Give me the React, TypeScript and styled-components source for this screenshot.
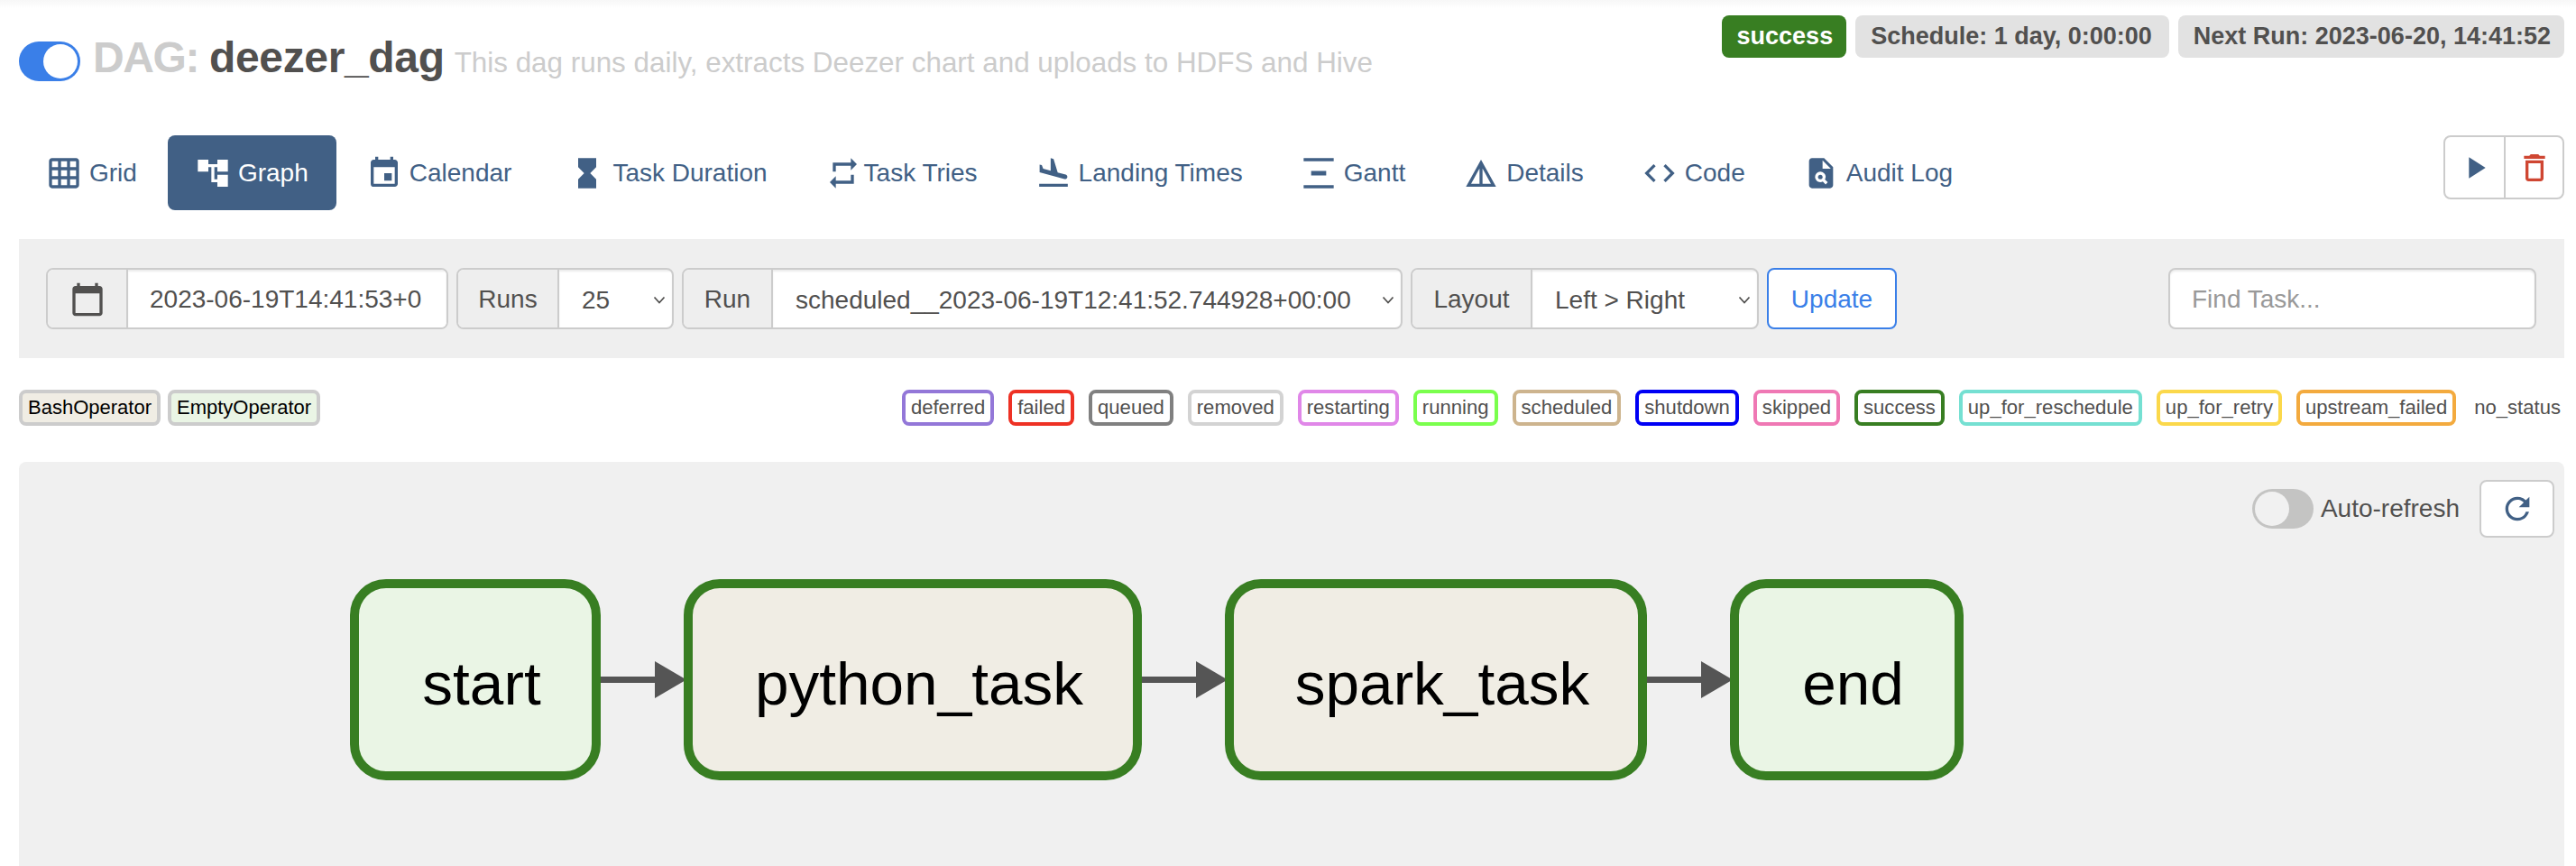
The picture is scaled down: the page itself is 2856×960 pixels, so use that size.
import React from 'react';
import styled, { createGlobalStyle } from 'styled-components';
import {
  MdGridOn,
  MdAccountTree,
  MdEvent,
  MdHourglassFull,
  MdRepeat,
  MdFlightLand,
  MdVerticalDistribute,
  MdDetails,
  MdCode,
  MdPlagiarism,
  MdPlayArrow,
  MdDeleteOutline,
  MdRefresh,
  MdCalendarToday,
} from 'react-icons/md';

const GlobalStyle = createGlobalStyle`
  html, body {
    margin: 0;
    padding: 0;
    background: #fff;
    font-family: "Liberation Sans", Arial, sans-serif;
    color: #51504f;
  }
  * { box-sizing: border-box; }
`;

const Page = styled.div`
  width: 2856px;
  height: 960px;
  overflow: hidden;
  padding: 0 13px 0 21px;
  background: linear-gradient(#f7f7f7, #fff 9px);
`;

const Header = styled.header`
  height: 150px;
  display: flex;
  justify-content: space-between;
  align-items: flex-start;
`;

const TitleRow = styled.div`
  display: flex;
  align-items: flex-start;
  padding-top: 46px;
`;

const Title = styled.h3`
  margin: -4px 0 0 14px;
  font-size: 48px;
  line-height: 44px;
  font-weight: 700;
  color: #ccc;
  white-space: nowrap;
`;

const DagPrefix = styled.span`
  letter-spacing: -1.4px;
`;

const DagName = styled.span`
  letter-spacing: -0.35px;
  color: #51504f;
`;

const Description = styled.small`
  margin-left: 11px;
  font-size: 31.4px;
  font-weight: 400;
  letter-spacing: 0;
  color: #ccc;
`;

const Switch = styled.span<{ $on?: boolean }>`
  flex: none;
  width: 68px;
  height: 44px;
  border-radius: 22px;
  padding: 3px;
  display: flex;
  justify-content: ${(p) => (p.$on ? 'flex-end' : 'flex-start')};
  background: ${(p) => (p.$on ? '#3a7fe8' : '#c4c4c3')};
  &::after {
    content: '';
    width: 38px;
    height: 38px;
    border-radius: 50%;
    background: ${(p) => (p.$on ? '#fff' : '#f1f1f1')};
  }
`;

const Pills = styled.div`
  display: flex;
  gap: 10px;
  padding-top: 17px;
`;

const Pill = styled.span<{ $success?: boolean; $trail?: number }>`
  height: 47px;
  padding: 0 ${(p) => p.$trail ?? 15}px 0 17px;
  display: flex;
  align-items: center;
  border-radius: 8px;
  font-size: 27px;
  font-weight: 700;
  white-space: nowrap;
  background: ${(p) => (p.$success ? '#387e22' : '#e2e2e2')};
  color: ${(p) => (p.$success ? '#fff' : '#51504f')};
`;

const NavRow = styled.div`
  display: flex;
  justify-content: space-between;
  align-items: flex-start;
  height: 83px;
`;

const Nav = styled.nav`
  display: flex;
`;

const NavItem = styled.a<{ $active?: boolean; $gap?: number }>`
  height: 83px;
  padding: 0 ${(p) => (p.$active ? 31 : 34)}px 0 30px;
  margin-right: ${(p) => (p.$active ? 3 : 0)}px;
  display: flex;
  align-items: center;
  gap: ${(p) => p.$gap ?? 8}px;
  border-radius: 8px;
  font-size: 28px;
  white-space: nowrap;
  background: ${(p) => (p.$active ? '#416085' : 'transparent')};
  color: ${(p) => (p.$active ? '#fff' : '#416085')};
  svg {
    flex: none;
    width: 40px;
    height: 40px;
  }
`;

const ActionGroup = styled.div`
  display: flex;
  height: 71px;
  border: 2px solid #ccc;
  border-radius: 8px;
`;

const ActionButton = styled.button<{ $danger?: boolean }>`
  width: 65px;
  padding: 0;
  display: flex;
  align-items: center;
  justify-content: center;
  background: none;
  border: 0;
  color: ${(p) => (p.$danger ? '#cf4632' : '#416085')};
  & + & {
    border-left: 2px solid #ccc;
  }
  svg {
    width: 40px;
    height: 40px;
  }
`;

const FilterBar = styled.form`
  margin-top: 32px;
  height: 132px;
  padding: 0 31px 0 30px;
  display: flex;
  align-items: center;
  justify-content: space-between;
  background: #efefef;
`;

const Filters = styled.div`
  display: flex;
  gap: 9px;
`;

const Group = styled.div`
  height: 68px;
  display: flex;
  background: #fff;
  border: 2px solid #ccc;
  border-radius: 8px;
  overflow: hidden;
  font-size: 28px;
`;

const Addon = styled.span<{ $width: number }>`
  flex: none;
  width: ${(p) => p.$width}px;
  padding-top: 2px;
  display: flex;
  align-items: center;
  justify-content: center;
  background: #eee;
  border-right: 2px solid #ccc;
  svg {
    width: 40px;
    height: 40px;
  }
`;

const DateInput = styled.input`
  width: 353px;
  padding: 2px 0 0 24px;
  border: 0;
  outline: 0;
  font: inherit;
  color: #51504f;
  background: #fff;
  box-shadow: inset 0 2px 2px rgba(0, 0, 0, 0.075);
`;

const SelectBox = styled.div<{ $width: number }>`
  position: relative;
  width: ${(p) => p.$width}px;
  box-shadow: inset 0 2px 2px rgba(0, 0, 0, 0.075);
`;

const Select = styled.select`
  width: 100%;
  height: 100%;
  padding: 2px 0 0 25px;
  border: 0;
  outline: 0;
  appearance: none;
  background: transparent;
  font: inherit;
  color: #51504f;
`;

const Chevron = styled.svg`
  position: absolute;
  right: 7px;
  top: 29px;
  width: 14px;
  height: 9px;
  pointer-events: none;
`;

const UpdateButton = styled.button`
  width: 144px;
  height: 68px;
  padding: 2px 0 0;
  background: #fff;
  border: 2px solid #3a7fe8;
  border-radius: 8px;
  font: inherit;
  font-size: 28px;
  color: #3a7fe8;
`;

const SearchInput = styled.input`
  width: 408px;
  height: 68px;
  padding: 2px 24px 0;
  background: #fff;
  border: 2px solid #ccc;
  border-radius: 8px;
  outline: 0;
  font: inherit;
  font-size: 28px;
  box-shadow: inset 0 2px 2px rgba(0, 0, 0, 0.075);
  &::placeholder {
    color: #999;
    opacity: 1;
  }
`;

const LegendRow = styled.div`
  margin-top: 35px;
  display: flex;
  justify-content: space-between;
`;

const LegendGroup = styled.div<{ $gap: number }>`
  display: flex;
  gap: ${(p) => p.$gap}px;
`;

const OperatorTag = styled.span<{ $bg: string }>`
  height: 40px;
  padding: 0 6px;
  display: flex;
  align-items: center;
  border: 4px solid #ccc;
  border-radius: 8px;
  font-size: 22px;
  color: #000;
  background: ${(p) => p.$bg};
`;

const StateTag = styled.span<{ $color?: string }>`
  height: 40px;
  padding: 0 ${(p) => (p.$color ? 6 : 4)}px;
  display: flex;
  align-items: center;
  border: ${(p) => (p.$color ? `4px solid ${p.$color}` : '0')};
  border-radius: 8px;
  font-size: 22.1px;
  white-space: nowrap;
  background: #fff;
`;

const GraphPanel = styled.section`
  margin-top: 40px;
  height: 448px;
  padding: 20px 11px 0 0;
  background: #f0f0f0;
  border-radius: 8px 8px 0 0;
`;

const GraphToolbar = styled.div`
  display: flex;
  justify-content: flex-end;
  align-items: center;
  height: 64px;
`;

const RefreshLabel = styled.span`
  margin: 0 22px 0 8px;
  font-size: 28px;
`;

const RefreshButton = styled.button`
  width: 83px;
  height: 64px;
  padding: 0;
  display: flex;
  align-items: center;
  justify-content: center;
  background: #fff;
  border: 2px solid #ccc;
  border-radius: 8px;
  color: #416085;
  svg {
    width: 40px;
    height: 40px;
  }
`;

const Diagram = styled.div`
  margin-top: 46px;
  padding-left: 367px;
  display: flex;
  align-items: center;
`;

const TaskNode = styled.div<{ $width: number; $bg: string }>`
  flex: none;
  width: ${(p) => p.$width}px;
  height: 223px;
  padding: 8px 0 0 14px;
  display: flex;
  align-items: center;
  justify-content: center;
  border: 10px solid #387e22;
  border-radius: 40px;
  background: ${(p) => p.$bg};
  font-size: 67.5px;
  color: #000;
`;

const EdgeSvg = styled.svg`
  flex: none;
  width: 92px;
  height: 41px;
  overflow: visible;
`;

const Edge = () => (
  <EdgeSvg viewBox="0 0 92 41">
    <rect x="0" y="17" width="62" height="7" fill="#555" />
    <path d="M60 0 L95 20.5 L60 41 Z" fill="#555" />
  </EdgeSvg>
);

const ChevronDown = () => (
  <Chevron viewBox="0 0 14 9">
    <path d="M1.5 1.5 L7 7.5 L12.5 1.5" fill="none" stroke="#51504f" strokeWidth="1.8" />
  </Chevron>
);

const navItems = [
  { label: 'Grid', icon: <MdGridOn /> },
  { label: 'Graph', icon: <MdAccountTree />, active: true },
  { label: 'Calendar', icon: <MdEvent /> },
  { label: 'Task Duration', icon: <MdHourglassFull /> },
  { label: 'Task Tries', icon: <MdRepeat />, gap: 3 },
  { label: 'Landing Times', icon: <MdFlightLand /> },
  { label: 'Gantt', icon: <MdVerticalDistribute /> },
  { label: 'Details', icon: <MdDetails /> },
  { label: 'Code', icon: <MdCode /> },
  { label: 'Audit Log', icon: <MdPlagiarism /> },
];

const states = [
  { label: 'deferred', color: '#9377d8' },
  { label: 'failed', color: '#ee3124' },
  { label: 'queued', color: '#808080' },
  { label: 'removed', color: '#d3d3d3' },
  { label: 'restarting', color: '#e087e8' },
  { label: 'running', color: '#7aff4d' },
  { label: 'scheduled', color: '#cdb48e' },
  { label: 'shutdown', color: '#0000f5' },
  { label: 'skipped', color: '#ef78b4' },
  { label: 'success', color: '#387e22' },
  { label: 'up_for_reschedule', color: '#75e0d2' },
  { label: 'up_for_retry', color: '#fbd84b' },
  { label: 'upstream_failed', color: '#f3aa3e' },
  { label: 'no_status' },
];

const App: React.FC = () => {
  return (
    <Page>
      <GlobalStyle />
      <Header>
        <TitleRow>
          <Switch $on />
          <Title>
            <DagPrefix>DAG: </DagPrefix>
            <DagName>deezer_dag</DagName>
            <Description>This dag runs daily, extracts Deezer chart and uploads to HDFS and Hive</Description>
          </Title>
        </TitleRow>
        <Pills>
          <Pill $success>success</Pill>
          <Pill $trail={19}>Schedule: 1 day, 0:00:00</Pill>
          <Pill>Next Run: 2023-06-20, 14:41:52</Pill>
        </Pills>
      </Header>

      <NavRow>
        <Nav>
          {navItems.map((item) => (
            <NavItem key={item.label} $active={item.active} $gap={item.gap}>
              {item.icon}
              {item.label}
            </NavItem>
          ))}
        </Nav>
        <ActionGroup>
          <ActionButton aria-label="Trigger DAG">
            <MdPlayArrow />
          </ActionButton>
          <ActionButton $danger aria-label="Delete DAG">
            <MdDeleteOutline />
          </ActionButton>
        </ActionGroup>
      </NavRow>

      <FilterBar>
        <Filters>
          <Group>
            <Addon $width={89}>
              <MdCalendarToday />
            </Addon>
            <DateInput readOnly value="2023-06-19T14:41:53+0" />
          </Group>
          <Group>
            <Addon $width={112}>Runs</Addon>
            <SelectBox $width={125}>
              <Select defaultValue="25">
                <option>25</option>
              </Select>
              <ChevronDown />
            </SelectBox>
          </Group>
          <Group>
            <Addon $width={99}>Run</Addon>
            <SelectBox $width={696}>
              <Select defaultValue="scheduled__2023-06-19T12:41:52.744928+00:00">
                <option>scheduled__2023-06-19T12:41:52.744928+00:00</option>
              </Select>
              <ChevronDown />
            </SelectBox>
          </Group>
          <Group>
            <Addon $width={133}>Layout</Addon>
            <SelectBox $width={249}>
              <Select defaultValue="Left > Right">
                <option>{'Left > Right'}</option>
              </Select>
              <ChevronDown />
            </SelectBox>
          </Group>
          <UpdateButton type="button">Update</UpdateButton>
        </Filters>
        <SearchInput placeholder="Find Task..." />
      </FilterBar>

      <LegendRow>
        <LegendGroup $gap={8}>
          <OperatorTag $bg="#f0ede4">BashOperator</OperatorTag>
          <OperatorTag $bg="#eaf5e5">EmptyOperator</OperatorTag>
        </LegendGroup>
        <LegendGroup $gap={16}>
          {states.map((state) => (
            <StateTag key={state.label} $color={state.color}>
              {state.label}
            </StateTag>
          ))}
        </LegendGroup>
      </LegendRow>

      <GraphPanel>
        <GraphToolbar>
          <Switch />
          <RefreshLabel>Auto-refresh</RefreshLabel>
          <RefreshButton aria-label="Refresh">
            <MdRefresh />
          </RefreshButton>
        </GraphToolbar>
        <Diagram>
          <TaskNode $width={278} $bg="#eaf5e5">start</TaskNode>
          <Edge />
          <TaskNode $width={508} $bg="#f0ede4">python_task</TaskNode>
          <Edge />
          <TaskNode $width={468} $bg="#f0ede4">spark_task</TaskNode>
          <Edge />
          <TaskNode $width={259} $bg="#eaf5e5">end</TaskNode>
        </Diagram>
      </GraphPanel>
    </Page>
  );
};

export default App;
